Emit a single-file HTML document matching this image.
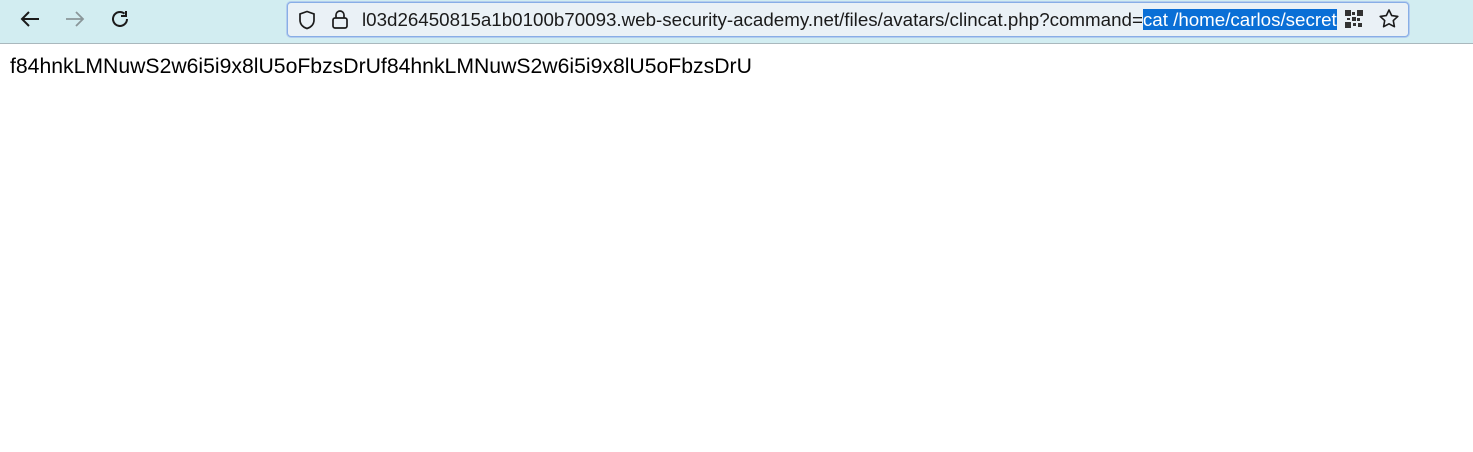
<!DOCTYPE html>
<html><head><meta charset="utf-8"><style>
html,body{margin:0;padding:0;width:1473px;height:452px;overflow:hidden;background:#fff;font-family:"Liberation Sans",sans-serif}
.bar{position:absolute;left:0;top:0;width:1473px;height:43px;background:#d2edf1;border-bottom:1px solid #a9b8bd}
.url{position:absolute;left:287px;top:2px;width:1120px;height:33px;background:#eaf1f6;border:1px solid #88aee6;border-radius:4px;box-shadow:0 0 0 1px #b4cdee}
.u{position:absolute;left:74px;top:5px;font-size:18.75px;line-height:23px;color:#1b1b1b;white-space:nowrap}
.sel{background:#0a6fd6;color:#fff}
.txt{position:absolute;left:10px;top:55px;font-size:21.2px;color:#000;white-space:nowrap}
svg{position:absolute}
</style></head><body>
<div class="bar">
<svg style="left:18px;top:9px" width="24" height="20" viewBox="0 0 24 20"><path d="M21 10H4M11 3L4 10l7 7" fill="none" stroke="#1b1b1b" stroke-width="2"/></svg>
<svg style="left:63px;top:9px" width="24" height="20" viewBox="0 0 24 20"><path d="M3 10h17M13 3l7 7-7 7" fill="none" stroke="#8a9699" stroke-width="1.8"/></svg>
<svg style="left:110px;top:8px" width="22" height="22" viewBox="0 0 22 22"><path d="M17 11a7 7 0 1 1-2.5-5.4" fill="none" stroke="#1b1b1b" stroke-width="2"/><path d="M16 3v5h-5" fill="none" stroke="#1b1b1b" stroke-width="2"/></svg>
<div class="url">
<svg style="left:8px;top:6px" width="22" height="22" viewBox="0 0 22 22"><path d="M11 2.5L4 5v6c0 4.5 3.3 7.5 7 8.5 3.7-1 7-4 7-8.5V5z" fill="none" stroke="#1b1b1b" stroke-width="1.7"/></svg>
<svg style="left:42px;top:5px" width="20" height="22" viewBox="0 0 20 22"><rect x="3" y="10" width="14" height="10" rx="2" fill="none" stroke="#1b1b1b" stroke-width="1.7"/><path d="M6 10V7a4 4 0 0 1 8 0v3" fill="none" stroke="#1b1b1b" stroke-width="1.7"/></svg>
<div class="u">l03d26450815a1b0100b70093.web-security-academy.net/files/avatars/clincat.php?command=<span class="sel">cat /home/carlos/secret</span></div>
<svg style="left:1057px;top:7px" width="18" height="18" viewBox="0 0 18 18" fill="#333"><rect x="0" y="0" width="6" height="6"/><rect x="12" y="0" width="6" height="6"/><rect x="0" y="12" width="6" height="6"/><rect x="7" y="2" width="3" height="3"/><rect x="7" y="7" width="4" height="4"/><rect x="12" y="8" width="3" height="3"/><rect x="8" y="13" width="3" height="3"/><rect x="13" y="13" width="4" height="4"/><rect x="2" y="8" width="3" height="2"/></svg>
<svg style="left:1090px;top:5px" width="22" height="22" viewBox="0 0 22 22"><path d="M11 2l2.7 5.6 6.1.8-4.5 4.2 1.1 6.1L11 15.8l-5.4 2.9 1.1-6.1-4.5-4.2 6.1-.8z" fill="none" stroke="#1b1b1b" stroke-width="1.6" stroke-linejoin="round"/></svg>
</div>
</div>
<div class="txt">f84hnkLMNuwS2w6i5i9x8lU5oFbzsDrUf84hnkLMNuwS2w6i5i9x8lU5oFbzsDrU</div>
</body></html>
